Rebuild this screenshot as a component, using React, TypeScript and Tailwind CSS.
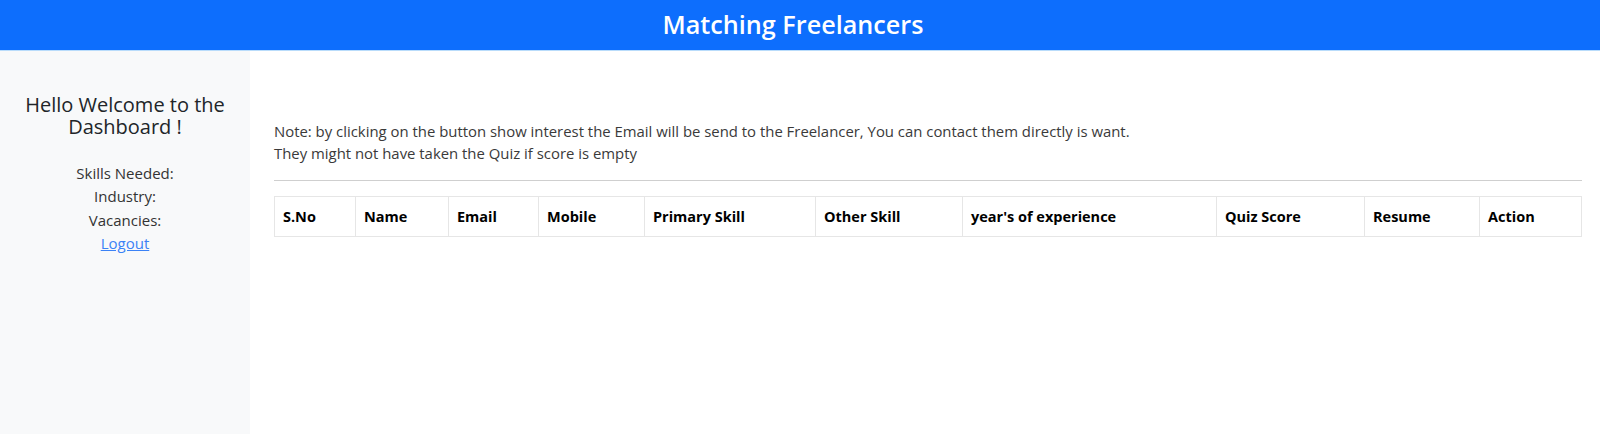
import React from 'react';

const columns = [
  { label: 'S.No', width: 'w-[81px]' },
  { label: 'Name', width: 'w-[93px]' },
  { label: 'Email', width: 'w-[90px]' },
  { label: 'Mobile', width: 'w-[106px]' },
  { label: 'Primary Skill', width: 'w-[171px]' },
  { label: 'Other Skill', width: 'w-[147px]' },
  { label: "year's of experience", width: 'w-[254px]' },
  { label: 'Quiz Score', width: 'w-[148px]' },
  { label: 'Resume', width: 'w-[115px]' },
  { label: 'Action', width: 'w-[102px]' },
];

export default function App() {
  return (
    <div className="flex h-[434px] flex-col bg-white font-['Open_Sans',sans-serif] text-[#212529]">
      <header className="flex h-[51px] shrink-0 items-center justify-center border-b border-[#b9dcfb] bg-[#0d6efd] pr-[14px]">
        <h3 className="text-[25.2px] font-semibold leading-none text-white">Matching Freelancers</h3>
      </header>

      <div className="flex flex-1">
        <aside className="w-[250px] shrink-0 bg-[#f8f9fa] pt-[43px] text-center">
          <h5 className="mb-[24px] text-[20px] font-medium leading-[22px]">
            Hello Welcome to the
            <br />
            Dashboard !
          </h5>
          <div className="text-[15px] leading-[23.3px] text-[#333]">
            <p>Skills Needed:</p>
            <p>Industry:</p>
            <p>Vacancies:</p>
            <a href="#" className="text-[#3b82f6] underline">
              Logout
            </a>
          </div>
        </aside>

        <main className="flex-1 pl-[24px] pr-[18px] pt-[69px]">
          <p className="text-[14.9px] leading-[22px] text-[#3a3a3a]">
            Note: by clicking on the button show interest the Email will be send to the Freelancer, You can contact
            them directly is want.
            <br />
            They might not have taken the Quiz if score is empty
          </p>
          <hr className="mt-[16px] mb-[15px] border-t border-[#cfcfcf]" />
          <table className="w-full table-fixed border-collapse text-[14.5px]">
            <thead>
              <tr>
                {columns.map((c) => (
                  <th
                    key={c.label}
                    className={`${c.width} h-[40px] border border-[#e6e6e6] px-2 text-left font-bold text-black`}
                  >
                    {c.label}
                  </th>
                ))}
              </tr>
            </thead>
          </table>
        </main>
      </div>
    </div>
  );
}
